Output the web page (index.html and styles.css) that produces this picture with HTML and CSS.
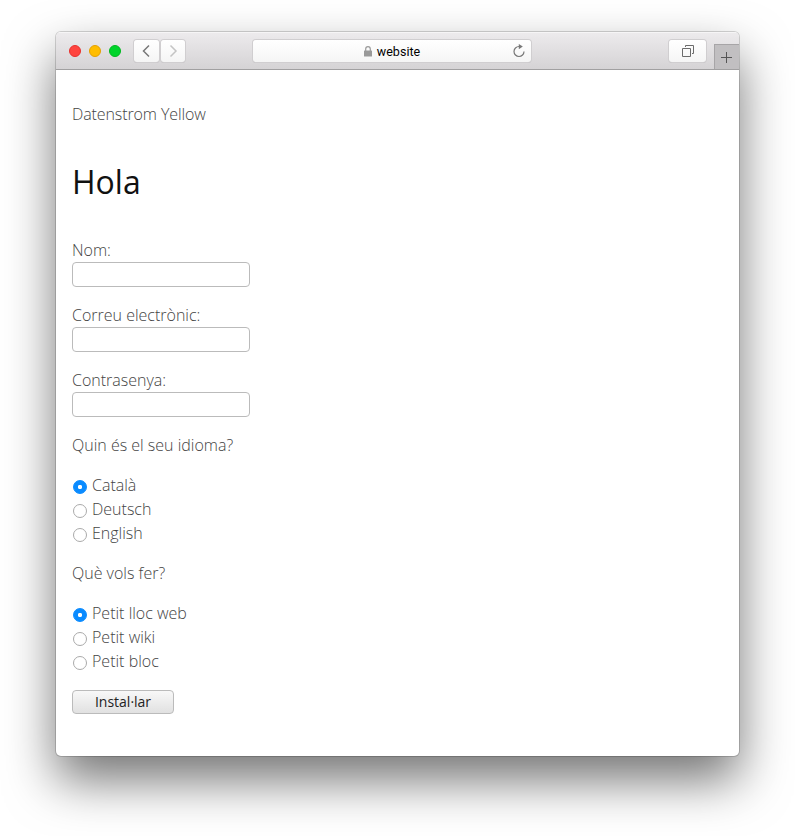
FILE: index.html
```html
<!DOCTYPE html>
<html lang="ca">
<head>
<meta charset="utf-8">
<title>Hola</title>
<link rel="stylesheet" href="styles.css">
</head>
<body>
<div class="window">
  <header class="toolbar">
    <div class="lights"><i class="light red"></i><i class="light amber"></i><i class="light green"></i></div>
    <div class="nav">
      <span class="tool"><svg width="24" height="22" viewBox="0 0 24 22"><path d="M15 5.500 9.500 11l5.500 5.500" fill="none" stroke="#777" stroke-width="1.500"/></svg></span>
      <span class="tool"><svg width="24" height="22" viewBox="0 0 24 22"><path d="M9.500 5.500 15 11l-5.500 5.500" fill="none" stroke="#c4c4c4" stroke-width="1.500"/></svg></span>
    </div>
    <div class="tool address">
      <svg class="lock" width="8" height="11" viewBox="0 0 8 11"><path d="M1.700 5V3a2.300 2.300 0 0 1 4.600 0v2" fill="none" stroke="#999" stroke-width="1.200"/><rect y="4.500" width="8" height="6" rx=".5" fill="#999"/></svg>
      <span>website</span>
      <svg class="reload" width="14" height="14" viewBox="0 0 14 14"><path d="M7 2.500a5 5 0 1 0 5 5" fill="none" stroke="#777" stroke-width="1.200"/><path d="M6.800 0v5.200L10.800 2.600z" fill="#777"/></svg>
    </div>
    <span class="tool tabs"><svg width="14" height="14" viewBox="0 0 14 14"><path d="M1.500 4.500h8v8h-8zM4.500 3V1.500h8v8H11" fill="none" stroke="#6b6b6b"/></svg></span>
    <span class="newtab"><svg width="11" height="11" viewBox="0 0 11 11"><path d="M5.500 0v11M0 5.500h11" stroke="#555"/></svg></span>
  </header>
  <main class="page">
    <p class="sitename">Datenstrom Yellow</p>
    <h1>Hola</h1>
    <form>
      <label class="field">Nom:<input type="text"></label>
      <label class="field">Correu electrònic:<input type="text"></label>
      <label class="field">Contrasenya:<input type="password"></label>
      <p>Quin és el seu idioma?</p>
      <div class="choices">
        <label><input type="radio" name="language" checked>Català</label>
        <label><input type="radio" name="language">Deutsch</label>
        <label><input type="radio" name="language">English</label>
      </div>
      <p>Què vols fer?</p>
      <div class="choices">
        <label><input type="radio" name="feature" checked>Petit lloc web</label>
        <label><input type="radio" name="feature">Petit wiki</label>
        <label><input type="radio" name="feature">Petit bloc</label>
      </div>
      <button type="button" lang="en">Instal·lar</button>
    </form>
  </main>
</div>
</body>
</html>
```

FILE: styles.css
```css
* { box-sizing: border-box; }
body { margin: 0; padding: 32px 56px 0; height: 836px; overflow: hidden; background: #fff; }
svg { display: block; }
.window {
  width: 683px; height: 724px; border-radius: 5px; background: #fff; overflow: hidden;
  box-shadow: 0 0 0 1px rgba(0,0,0,.16), 0 24px 50px rgba(0,0,0,.55);
}
.toolbar {
  display: flex; align-items: flex-start; height: 38px; padding: 8px 0 0 13px;
  background: linear-gradient(#edebed, #d5d3d5); border-bottom: 1px solid #a1a0a1;
  box-shadow: inset 0 1px #f6f5f6;
}
.lights { display: flex; gap: 8px; margin-top: 5px; }
.light { width: 12px; height: 12px; border-radius: 50%; border: 1px solid; }
.red { background: #ff443f; border-color: #e8302d; }
.amber { background: #ffbd00; border-color: #e5a000; }
.green { background: #00d42b; border-color: #00b81f; }
.nav { display: flex; gap: 2px; margin-left: 13px; }
.tool {
  display: flex; align-items: center; justify-content: center; height: 22px;
  background: linear-gradient(#fff, #f5f5f5); border-radius: 3px;
  box-shadow: 0 0 0 1px #d0ced0, 0 1px 0 0 #b0aeb0;
}
.nav .tool { width: 24.5px; }
.address {
  position: relative; width: 278px; margin-left: 68px; gap: 5px;
  font: 12.5px/23px Roboto, sans-serif; color: #000; letter-spacing: .05px;
}
.reload { position: absolute; right: 5px; top: 4px; }
.tabs { width: 37px; margin-left: 138px; }
.newtab {
  display: flex; align-items: center; justify-content: center; width: 25px; height: 25px;
  margin: 4px 0 0 auto; padding-right: 1px; border: 1px solid #a7a5a7; border-width: 1px 0 0 1px; background: #c1bfc1;
}
.page { padding: 32px 16px 0; font: 300 16px/24px "Open Sans", sans-serif; color: #444; }
p { margin: 0 0 16px; }
.page .sitename { margin: 0; letter-spacing: -.1px; }
h1 { margin: 32px 0; font-size: 32px; line-height: 48px; font-weight: 400; color: #111; }
.field { display: block; margin-bottom: 16px; }
.field input {
  display: block; width: 178px; height: 25px; margin: 0; padding: 0 4px;
  border: 1px solid #bbb; border-radius: 4px; background: #fff;
}
.choices { margin-bottom: 16px; }
.choices label { display: flex; height: 24px; }
.choices input {
  appearance: none; width: 14px; height: 14px; margin: 7px 5px 0 1px;
  border: 1px solid #aaa; border-radius: 50%; background: #fff;
}
.choices input:checked { border-color: #0a8bff; background: radial-gradient(circle, #fff 1.800px, #0a8bff 2.500px); }
button {
  display: block; width: 102px; height: 24px; margin: 17px 0 0; padding: 0;
  border: 1px solid #bbb; border-radius: 4px;
  background: linear-gradient(#f8f8f8, #e1e1e1); font: 14px/22px "Open Sans", sans-serif; color: #222;
}
```
